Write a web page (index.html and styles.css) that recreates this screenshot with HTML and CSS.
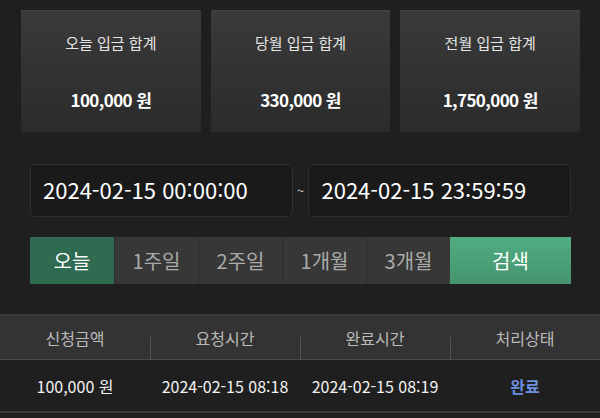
FILE: index.html
```html
<!DOCTYPE html>
<html lang="ko">
<head>
<meta charset="utf-8">
<meta name="viewport" content="width=device-width, initial-scale=1.0">
<title>입금 내역</title>
<link rel="stylesheet" href="styles.css">
</head>
<body>
  <!-- 합계 카드 -->
  <div class="summary">
    <div class="card">
      <div class="card-title">오늘 입금 합계</div>
      <div class="card-amount">100,000 원</div>
    </div>
    <div class="card">
      <div class="card-title">당월 입금 합계</div>
      <div class="card-amount">330,000 원</div>
    </div>
    <div class="card">
      <div class="card-title">전월 입금 합계</div>
      <div class="card-amount">1,750,000 원</div>
    </div>
  </div>

  <!-- 기간 검색 -->
  <div class="date-range">
    <div class="date-input">2024-02-15 00:00:00</div>
    <span class="tilde">~</span>
    <div class="date-input">2024-02-15 23:59:59</div>
  </div>

  <div class="period">
    <button class="period-btn active">오늘</button>
    <button class="period-btn">1주일</button>
    <button class="period-btn">2주일</button>
    <button class="period-btn">1개월</button>
    <button class="period-btn">3개월</button>
    <button class="search-btn">검색</button>
  </div>

  <!-- 내역 -->
  <table class="list">
    <thead>
      <tr>
        <th>신청금액</th>
        <th>요청시간</th>
        <th>완료시간</th>
        <th>처리상태</th>
      </tr>
    </thead>
    <tbody>
      <tr>
        <td>100,000 원</td>
        <td>2024-02-15 08:18</td>
        <td>2024-02-15 08:19</td>
        <td class="done">완료</td>
      </tr>
    </tbody>
  </table>
</body>
</html>
```

FILE: styles.css
```css
body {
  margin: 0;
  background: #1f1f1f;
  font-family: "Noto Sans CJK KR", "Noto Sans", sans-serif;
  color: #fff;
  width: 600px;
  height: 418px;
  overflow: hidden;
}
/* 합계 카드 */
.summary {
  display: flex;
  gap: 10px;
  padding: 10px 20px 0 21px;
}
.card {
  width: 180px;
  height: 122px;
  box-sizing: border-box;
  background: linear-gradient(#3a3a3a, #2b2b2b);
  border-top: 1px solid #444;
  text-align: center;
}
.card-title {
  font-size: 15px;
  color: #e6e6e6;
  margin-top: 22px;
  line-height: 20px;
}
.card-amount {
  font-size: 17px;
  font-weight: bold;
  margin-top: 35px;
  line-height: 24px;
  letter-spacing: -0.6px;
}
/* 날짜 입력 */
.date-range {
  display: flex;
  align-items: center;
  padding: 32px 29px 0 30px;
}
.date-input {
  width: 263px;
  height: 53px;
  box-sizing: border-box;
  background: #1a1a1a;
  border: 1px solid #2f2f2f;
  border-radius: 5px;
  padding: 0 12px;
  font-size: 22px;
  line-height: 49px;
  color: #fff;
}
.tilde {
  width: 16px;
  text-align: center;
  font-size: 13px;
  color: #ccc;
}
/* 기간 버튼 */
.period {
  display: flex;
  margin: 20px 29px 0 30px;
  height: 47px;
}
.period-btn, .search-btn {
  border: 0;
  font-family: inherit;
  font-size: 20px;
  height: 47px;
  padding: 0;
}
.period-btn {
  width: 84px;
  background: #373737;
  color: #aaa;
  border-left: 1px solid #2a2a2a;
}
.period-btn.active {
  background: #2e6b51;
  color: #fff;
  border-left: 0;
}
.search-btn {
  flex: 1;
  background: linear-gradient(#52ad82, #44946f);
  color: #fff;
}
/* 내역 표 */
.list {
  width: 600px;
  margin-top: 30px;
  border-collapse: collapse;
  table-layout: fixed;
  font-size: 16px;
}
.list th {
  background: #333;
  border-top: 2px solid #3d3d3d;
  border-bottom: 1px solid #4a4a4a;
  color: #bbb;
  font-weight: normal;
  font-size: 16px;
  height: 43px;
  padding: 0;
  position: relative;
}
.list th + th::before {
  content: "";
  position: absolute;
  left: 0;
  top: 21px;
  bottom: 0;
  border-left: 1px solid #555;
}
.list td {
  text-align: center;
  height: 51px;
  padding: 0;
  border-bottom: 2px solid #3a3a3a;
  color: #f2f2f2;
}
.list td.done {
  color: #6d8fe0;
  font-weight: bold;
}
```
